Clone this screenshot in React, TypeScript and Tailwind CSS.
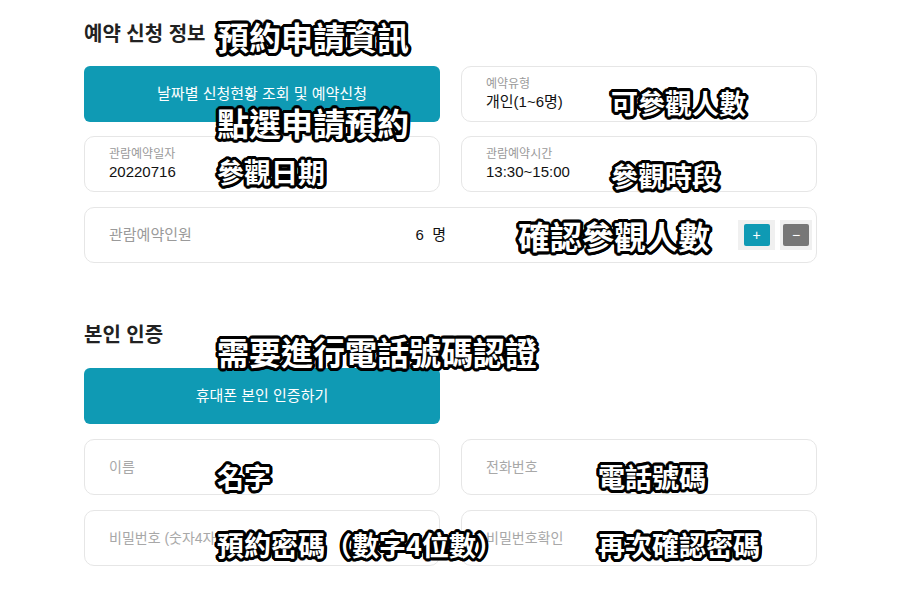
import React from "react";

const KR = "font-['Liberation_Sans','Noto_Sans_CJK_KR',sans-serif]";
const ANN =
  "absolute whitespace-nowrap font-['Noto_Sans_CJK_TC',sans-serif] font-bold text-white leading-none [text-shadow:3px_0_0_#000,-3px_0_0_#000,0_3px_0_#000,0_-3px_0_#000,2px_2px_0_#000,-2px_2px_0_#000,2px_-2px_0_#000,-2px_-2px_0_#000,3px_1px_0_#000,3px_-1px_0_#000,-3px_1px_0_#000,-3px_-1px_0_#000,1px_3px_0_#000,-1px_3px_0_#000,1px_-3px_0_#000,-1px_-3px_0_#000,0_0_2px_#000]";

function InfoCard({ label, value }: { label: string; value: string }) {
  return (
    <div className="h-[56px] rounded-[10px] border border-[#e6e6e6] bg-white pl-6 flex flex-col justify-center">
      <div className="text-[12px] leading-[16px] text-[#9a9a9a]">{label}</div>
      <div className="text-[15px] leading-[20px] text-[#111]">{value}</div>
    </div>
  );
}

function InputCard({ placeholder }: { placeholder: string }) {
  return (
    <div className="h-[56px] rounded-[10px] border border-[#e6e6e6] bg-white pl-6 flex items-center">
      <span className="text-[14px] text-[#a8a8a8]">{placeholder}</span>
    </div>
  );
}

function TealButton({ text }: { text: string }) {
  return (
    <div className="h-[56px] rounded-[6px] bg-[#0f9ab4] flex items-center justify-center text-white text-[15px]">
      {text}
    </div>
  );
}

export default function App() {
  return (
    <div className={`relative w-[900px] h-[600px] bg-white overflow-hidden ${KR}`}>
      <div className="ml-[84px] w-[733px] pt-[20px]">
        <h2 className="text-[20px] leading-[28px] font-bold text-[#222] mb-[18px]">예약 신청 정보</h2>
        <div className="grid grid-cols-2 gap-x-[21px] gap-y-[14px]">
          <TealButton text="날짜별 신청현황 조회 및 예약신청" />
          <InfoCard label="예약유형" value="개인(1~6명)" />
          <InfoCard label="관람예약일자" value="20220716" />
          <InfoCard label="관람예약시간" value="13:30~15:00" />
        </div>
        <div className="mt-[15px] h-[56px] rounded-[10px] border border-[#e6e6e6] bg-white pl-6 pr-[4px] flex items-center">
          <div className="w-[337px] flex items-center justify-between">
            <span className="text-[15px] text-[#9a9a9a]">관람예약인원</span>
            <span className="text-[15px] text-[#111]">6&nbsp;&nbsp;명</span>
          </div>
          <div className="ml-auto flex gap-[5px]">
            <div className="w-[37px] h-[30px] bg-[#f0f0f0] flex items-center justify-center">
              <div className="w-[26px] h-[22px] rounded-[2px] bg-[#0f9ab4] text-white text-[14px] leading-none flex items-center justify-center">+</div>
            </div>
            <div className="w-[32px] h-[30px] bg-[#f0f0f0] flex items-center justify-center">
              <div className="w-[26px] h-[22px] rounded-[2px] bg-[#777777] text-white text-[14px] leading-none flex items-center justify-center">−</div>
            </div>
          </div>
        </div>

        <h2 className="mt-[58px] text-[20px] leading-[28px] font-bold text-[#222] mb-[19px]">본인 인증</h2>
        <div className="grid grid-cols-2 gap-x-[21px] gap-y-[15px]">
          <TealButton text="휴대폰 본인 인증하기" />
          <div />
          <InputCard placeholder="이름" />
          <InputCard placeholder="전화번호" />
          <InputCard placeholder="비밀번호 (숫자4자리)" />
          <InputCard placeholder="비밀번호확인" />
        </div>
      </div>

      <div className={`${ANN} left-[217px] top-[20px] text-[32px]`}>預約申請資訊</div>
      <div className={`${ANN} left-[217px] top-[106px] text-[32px]`}>點選申請預約</div>
      <div className={`${ANN} left-[611px] top-[89px] text-[27px]`}>可參觀人數</div>
      <div className={`${ANN} left-[217px] top-[158px] text-[27px]`}>參觀日期</div>
      <div className={`${ANN} left-[611px] top-[162px] text-[27px]`}>參觀時段</div>
      <div className={`${ANN} left-[518px] top-[219px] text-[32px]`}>確認參觀人數</div>
      <div className={`${ANN} left-[217px] top-[335px] text-[32px]`}>需要進行電話號碼認證</div>
      <div className={`${ANN} left-[217px] top-[463px] text-[27px]`}>名字</div>
      <div className={`${ANN} left-[598px] top-[463px] text-[27px]`}>電話號碼</div>
      <div className={`${ANN} left-[217px] top-[531px] text-[27px]`}>預約密碼（數字4位數）</div>
      <div className={`${ANN} left-[598px] top-[531px] text-[27px]`}>再次確認密碼</div>
    </div>
  );
}
